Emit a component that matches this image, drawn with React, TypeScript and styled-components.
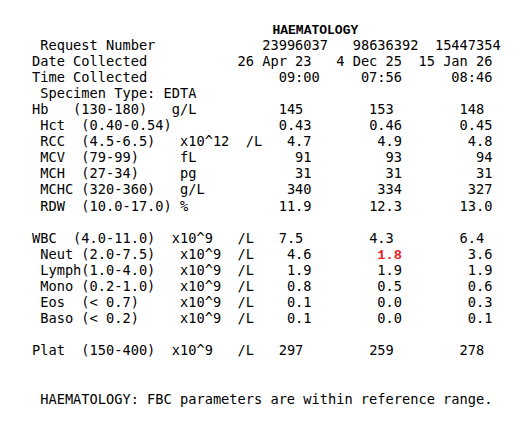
import React from 'react';
import styled, { createGlobalStyle } from 'styled-components';

// one line of a fixed-width lab report; columns are counted in characters
type Seg = { col: number; text: string; kind?: 'title' | 'flag' };

type Result = {
  left: string;
  values: string[];
  flagged?: number[];
};

const header: Seg[][] = [
  [{ col: 29, text: 'HAEMATOLOGY', kind: 'title' }],
  [
    { col: 1, text: 'Request Number' },
    { col: 28, text: '23996037' },
    { col: 39, text: '98636392' },
    { col: 49, text: '15447354' },
  ],
  [
    { col: 0, text: 'Date Collected' },
    { col: 25, text: '26 Apr 23' },
    { col: 37, text: '4 Dec 25' },
    { col: 47, text: '15 Jan 26' },
  ],
  [
    { col: 0, text: 'Time Collected' },
    { col: 30, text: '09:00' },
    { col: 40, text: '07:56' },
    { col: 51, text: '08:46' },
  ],
  [{ col: 1, text: 'Specimen Type: EDTA' }],
];

const results: (Result | null)[] = [
  { left: 'Hb   (130-180)   g/L', values: ['145', '153', '148'] },
  { left: ' Hct  (0.40-0.54)', values: ['0.43', '0.46', '0.45'] },
  { left: ' RCC  (4.5-6.5)   x10^12  /L', values: ['4.7', '4.9', '4.8'] },
  { left: ' MCV  (79-99)     fL', values: ['91', '93', '94'] },
  { left: ' MCH  (27-34)     pg', values: ['31', '31', '31'] },
  { left: ' MCHC (320-360)   g/L', values: ['340', '334', '327'] },
  { left: ' RDW  (10.0-17.0) %', values: ['11.9', '12.3', '13.0'] },
  null,
  { left: 'WBC  (4.0-11.0)  x10^9   /L', values: ['7.5', '4.3', '6.4'] },
  { left: ' Neut (2.0-7.5)   x10^9  /L', values: ['4.6', '1.8', '3.6'], flagged: [1] },
  { left: ' Lymph(1.0-4.0)   x10^9  /L', values: ['1.9', '1.9', '1.9'] },
  { left: ' Mono (0.2-1.0)   x10^9  /L', values: ['0.8', '0.5', '0.6'] },
  { left: ' Eos  (< 0.7)     x10^9  /L', values: ['0.1', '0.0', '0.3'] },
  { left: ' Baso (< 0.2)     x10^9  /L', values: ['0.1', '0.0', '0.1'] },
  null,
  { left: 'Plat  (150-400)  x10^9   /L', values: ['297', '259', '278'] },
];

const spaces = (n: number) => ' '.repeat(Math.max(0, n));

const SegLine: React.FC<{ segs: Seg[] }> = ({ segs }) => {
  let pos = 0;
  return (
    <Line>
      {segs.map((s, i) => {
        const gap = spaces(s.col - pos);
        pos = s.col + s.text.length;
        return (
          <React.Fragment key={i}>
            {gap}
            {s.kind === 'title' ? <Title>{s.text}</Title> : s.text}
          </React.Fragment>
        );
      })}
    </Line>
  );
};

const ResultLine: React.FC<{ row: Result }> = ({ row }) => {
  // sub-tests are indented one char, so their values end one char later
  const indent = row.left.startsWith(' ') ? 1 : 0;
  let pos = row.left.length;
  return (
    <Line>
      {row.left}
      {row.values.map((v, i) => {
        const end = 32 + indent + i * 11;
        const start = end - v.length + 1;
        const gap = spaces(start - pos);
        pos = end + 1;
        const low = row.flagged?.includes(i);
        return (
          <React.Fragment key={i}>
            {gap}
            {low ? <Flag>{v}</Flag> : v}
          </React.Fragment>
        );
      })}
    </Line>
  );
};

export default function App() {
  return (
    <>
      <GlobalStyle />
      <Sheet>
        {header.map((segs, i) => (
          <SegLine key={`h${i}`} segs={segs} />
        ))}
        {results.map((row, i) =>
          row ? <ResultLine key={`r${i}`} row={row} /> : <Line key={`r${i}`} />
        )}
        <Line />
        <Line />
        <Line>{' HAEMATOLOGY: FBC parameters are within reference range.'}</Line>
      </Sheet>
    </>
  );
}

const GlobalStyle = createGlobalStyle`
  html, body {
    margin: 0;
    padding: 0;
    background: #fff;
  }
`;

const Sheet = styled.div`
  box-sizing: border-box;
  width: 526px;
  height: 429px;
  padding: 20.5px 0 0 32px;
  font-family: 'DejaVu Sans Mono', monospace;
  font-size: 13.67px;
  line-height: 16.1px;
  color: #000;
`;

const Line = styled.div`
  height: 16.1px;
  white-space: pre;
`;

const Title = styled.span`
  margin-left: 2px;
  font-family: 'Liberation Mono', 'Courier New', monospace;
  font-size: 13px;
  font-weight: bold;
`;

const Flag = styled.span`
  font-family: 'Liberation Mono', 'Courier New', monospace;
  font-weight: bold;
  color: #ee1c25;
`;
